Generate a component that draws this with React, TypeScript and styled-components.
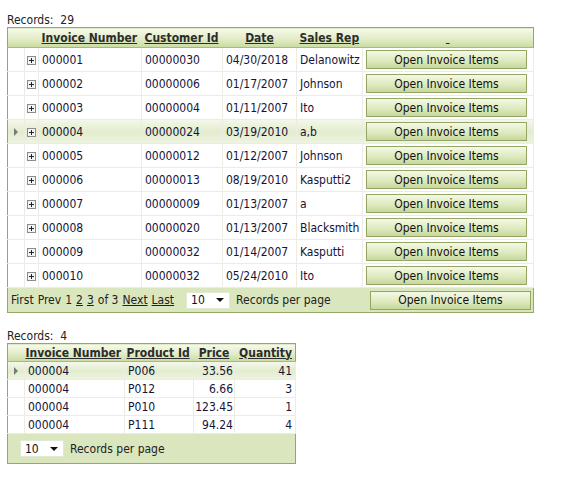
import React from 'react'
import styled, { createGlobalStyle } from 'styled-components'

const GlobalStyle = createGlobalStyle`
  body {
    margin: 0;
    background: #fff;
    font-family: 'DejaVu Sans Condensed', 'DejaVu Sans', sans-serif;
    font-size: 12px;
    color: #14143a;
  }
`

const Page = styled.div`
  padding: 13px 7px 20px 7px;
  display: flex;
  flex-direction: column;
  align-items: flex-start;
`

const RecordCount = styled.div`
  height: 14px;
  line-height: 14px;
  color: #222;
  white-space: pre;
`

const Grid = styled.table<{ width: number }>`
  width: ${(p) => p.width}px;
  table-layout: fixed;
  border-collapse: collapse;
  border: 1px solid #96a868;
  margin-bottom: 16px;
`

const HeadCell = styled.th<{ align?: string; height: number }>`
  height: ${(p) => p.height}px;
  padding: 0 3px;
  text-align: ${(p) => p.align || 'left'};
  font-weight: bold;
  white-space: nowrap;
  overflow: hidden;
  background: linear-gradient(to bottom, #f6f9ec 0%, #e2ecc6 55%, #c9dba0 100%);
  border-bottom: 1px solid #a9b97e;

  a {
    color: #2c2c2c;
    text-decoration: underline;
  }
`

const Row = styled.tr<{ selected?: boolean; height: number }>`
  height: ${(p) => p.height}px;
  background: ${(p) =>
    p.selected
      ? 'linear-gradient(to bottom, #f3f7ea 0%, #e3ecce 50%, #eef4e2 100%)'
      : '#fff'};
`

const Cell = styled.td<{ align?: string; pad?: number }>`
  padding: 0 ${(p) => (p.pad ?? 3)}px;
  text-align: ${(p) => p.align || 'left'};
  white-space: nowrap;
  overflow: hidden;
  border: 1px solid #ecece4;
`

const MarkerCell = styled.td`
  padding: 0;
  border: 1px solid #ecece4;
  border-left: none;
  text-align: center;
`

const Arrow = styled.span`
  display: inline-block;
  width: 0;
  height: 0;
  border-top: 4px solid transparent;
  border-bottom: 4px solid transparent;
  border-left: 4px solid #7a7a7a;
  vertical-align: middle;
`

const Expander = styled.span`
  display: inline-block;
  position: relative;
  width: 7px;
  height: 7px;
  border: 1px solid #8c8c8c;
  background: #f4f4f4;
  vertical-align: middle;

  &::before,
  &::after {
    content: '';
    position: absolute;
    background: #222;
  }
  &::before {
    left: 1px;
    top: 3px;
    width: 5px;
    height: 1px;
  }
  &::after {
    left: 3px;
    top: 1px;
    width: 1px;
    height: 5px;
  }
`

const ActionButton = styled.button<{ width: number }>`
  display: block;
  width: ${(p) => p.width}px;
  height: 19px;
  padding: 0;
  border: 1px solid #93a663;
  background: linear-gradient(to bottom, #f4f8e6 0%, #dfeabf 55%, #c6d89b 100%);
  font-family: inherit;
  font-size: 12px;
  color: #111;
  cursor: pointer;
`

const PagerCell = styled.td<{ height: number }>`
  height: ${(p) => p.height}px;
  padding: 0 3px;
  background: #dae6be;
  border-top: 1px solid #b4c48c;
`

const PagerBar = styled.div`
  display: flex;
  align-items: center;
  white-space: nowrap;
  color: #222;
`

const PageLinks = styled.span`
  display: flex;
  gap: 4px;

  a {
    color: #222;
    text-decoration: underline;
  }
`

const PageSize = styled.div<{ offset: number }>`
  margin-left: ${(p) => p.offset}px;
  width: 44px;
  height: 17px;
  background: #fff;
  border: 1px solid #e2e9d2;
  display: flex;
  align-items: center;
  justify-content: space-between;
  padding: 0 5px 0 4px;
  box-sizing: border-box;
  color: #111;

  &::after {
    content: '';
    border-left: 4px solid transparent;
    border-right: 4px solid transparent;
    border-top: 4px solid #111;
  }
`

const PerPage = styled.span`
  margin-left: 6px;
`

const PagerButton = styled(ActionButton)`
  margin-left: auto;
  margin-right: -1px;
`

interface Invoice {
  id: string
  customer: string
  date: string
  rep: string
}

interface Item {
  invoice: string
  product: string
  price: string
  qty: number
}

const invoices: Invoice[] = [
  { id: '000001', customer: '00000030', date: '04/30/2018', rep: 'Delanowitz' },
  { id: '000002', customer: '00000006', date: '01/17/2007', rep: 'Johnson' },
  { id: '000003', customer: '00000004', date: '01/11/2007', rep: 'Ito' },
  { id: '000004', customer: '00000024', date: '03/19/2010', rep: 'a,b' },
  { id: '000005', customer: '00000012', date: '01/12/2007', rep: 'Johnson' },
  { id: '000006', customer: '00000013', date: '08/19/2010', rep: 'Kasputti2' },
  { id: '000007', customer: '00000009', date: '01/13/2007', rep: 'a' },
  { id: '000008', customer: '00000020', date: '01/13/2007', rep: 'Blacksmith' },
  { id: '000009', customer: '00000032', date: '01/14/2007', rep: 'Kasputti' },
  { id: '000010', customer: '00000032', date: '05/24/2010', rep: 'Ito' },
]

const items: Item[] = [
  { invoice: '000004', product: 'P006', price: '33.56', qty: 41 },
  { invoice: '000004', product: 'P012', price: '6.66', qty: 3 },
  { invoice: '000004', product: 'P010', price: '123.45', qty: 1 },
  { invoice: '000004', product: 'P111', price: '94.24', qty: 4 },
]

function InvoiceGrid() {
  return (
    <>
      <RecordCount>Records:  29</RecordCount>
      <Grid width={526}>
        <colgroup>
          <col style={{ width: 17 }} />
          <col style={{ width: 14 }} />
          <col style={{ width: 103 }} />
          <col style={{ width: 81 }} />
          <col style={{ width: 74 }} />
          <col style={{ width: 66 }} />
          <col style={{ width: 171 }} />
        </colgroup>
        <thead>
          <tr>
            <HeadCell height={19} />
            <HeadCell height={19} />
            <HeadCell height={19}>
              <a>Invoice Number</a>
            </HeadCell>
            <HeadCell height={19}>
              <a>Customer Id</a>
            </HeadCell>
            <HeadCell height={19} align="center">
              <a>Date</a>
            </HeadCell>
            <HeadCell height={19}>
              <a>Sales Rep</a>
            </HeadCell>
            <HeadCell height={19} align="center">
              <a>&nbsp;</a>
            </HeadCell>
          </tr>
        </thead>
        <tbody>
          {invoices.map((inv) => (
            <Row key={inv.id} height={24} selected={inv.id === '000004'}>
              <MarkerCell>{inv.id === '000004' && <Arrow />}</MarkerCell>
              <MarkerCell>
                <Expander />
              </MarkerCell>
              <Cell>{inv.id}</Cell>
              <Cell>{inv.customer}</Cell>
              <Cell>{inv.date}</Cell>
              <Cell>{inv.rep}</Cell>
              <Cell>
                <ActionButton width={161}>Open Invoice Items</ActionButton>
              </Cell>
            </Row>
          ))}
          <tr>
            <PagerCell height={24} colSpan={7}>
              <PagerBar>
                <PageLinks>
                  <span>First</span>
                  <span>Prev</span>
                  <span>1</span>
                  <a>2</a>
                  <a>3</a>
                  <span>of 3</span>
                  <a>Next</a>
                  <a>Last</a>
                </PageLinks>
                <PageSize offset={12}>10</PageSize>
                <PerPage>Records per page</PerPage>
                <PagerButton width={161}>Open Invoice Items</PagerButton>
              </PagerBar>
            </PagerCell>
          </tr>
        </tbody>
      </Grid>
    </>
  )
}

function ItemGrid() {
  return (
    <>
      <RecordCount>Records:  4</RecordCount>
      <Grid width={288}>
        <colgroup>
          <col style={{ width: 17 }} />
          <col style={{ width: 100 }} />
          <col style={{ width: 69 }} />
          <col style={{ width: 41 }} />
          <col style={{ width: 61 }} />
        </colgroup>
        <thead>
          <tr>
            <HeadCell height={17} />
            <HeadCell height={17} style={{ paddingLeft: 1 }}>
              <a>Invoice Number</a>
            </HeadCell>
            <HeadCell height={17} style={{ paddingLeft: 2 }}>
              <a>Product Id</a>
            </HeadCell>
            <HeadCell height={17} align="center">
              <a>Price</a>
            </HeadCell>
            <HeadCell height={17} align="right">
              <a>Quantity</a>
            </HeadCell>
          </tr>
        </thead>
        <tbody>
          {items.map((it, i) => (
            <Row key={it.product} height={18} selected={i === 0}>
              <MarkerCell>{i === 0 && <Arrow />}</MarkerCell>
              <Cell>{it.invoice}</Cell>
              <Cell>{it.product}</Cell>
              <Cell align="right" pad={1}>
                {it.price}
              </Cell>
              <Cell align="right">{it.qty}</Cell>
            </Row>
          ))}
          <tr>
            <PagerCell height={29} colSpan={5}>
              <PagerBar>
                <PageSize offset={9}>10</PageSize>
                <PerPage>Records per page</PerPage>
              </PagerBar>
            </PagerCell>
          </tr>
        </tbody>
      </Grid>
    </>
  )
}

export default function App() {
  return (
    <>
      <GlobalStyle />
      <Page>
        <InvoiceGrid />
        <ItemGrid />
      </Page>
    </>
  )
}
